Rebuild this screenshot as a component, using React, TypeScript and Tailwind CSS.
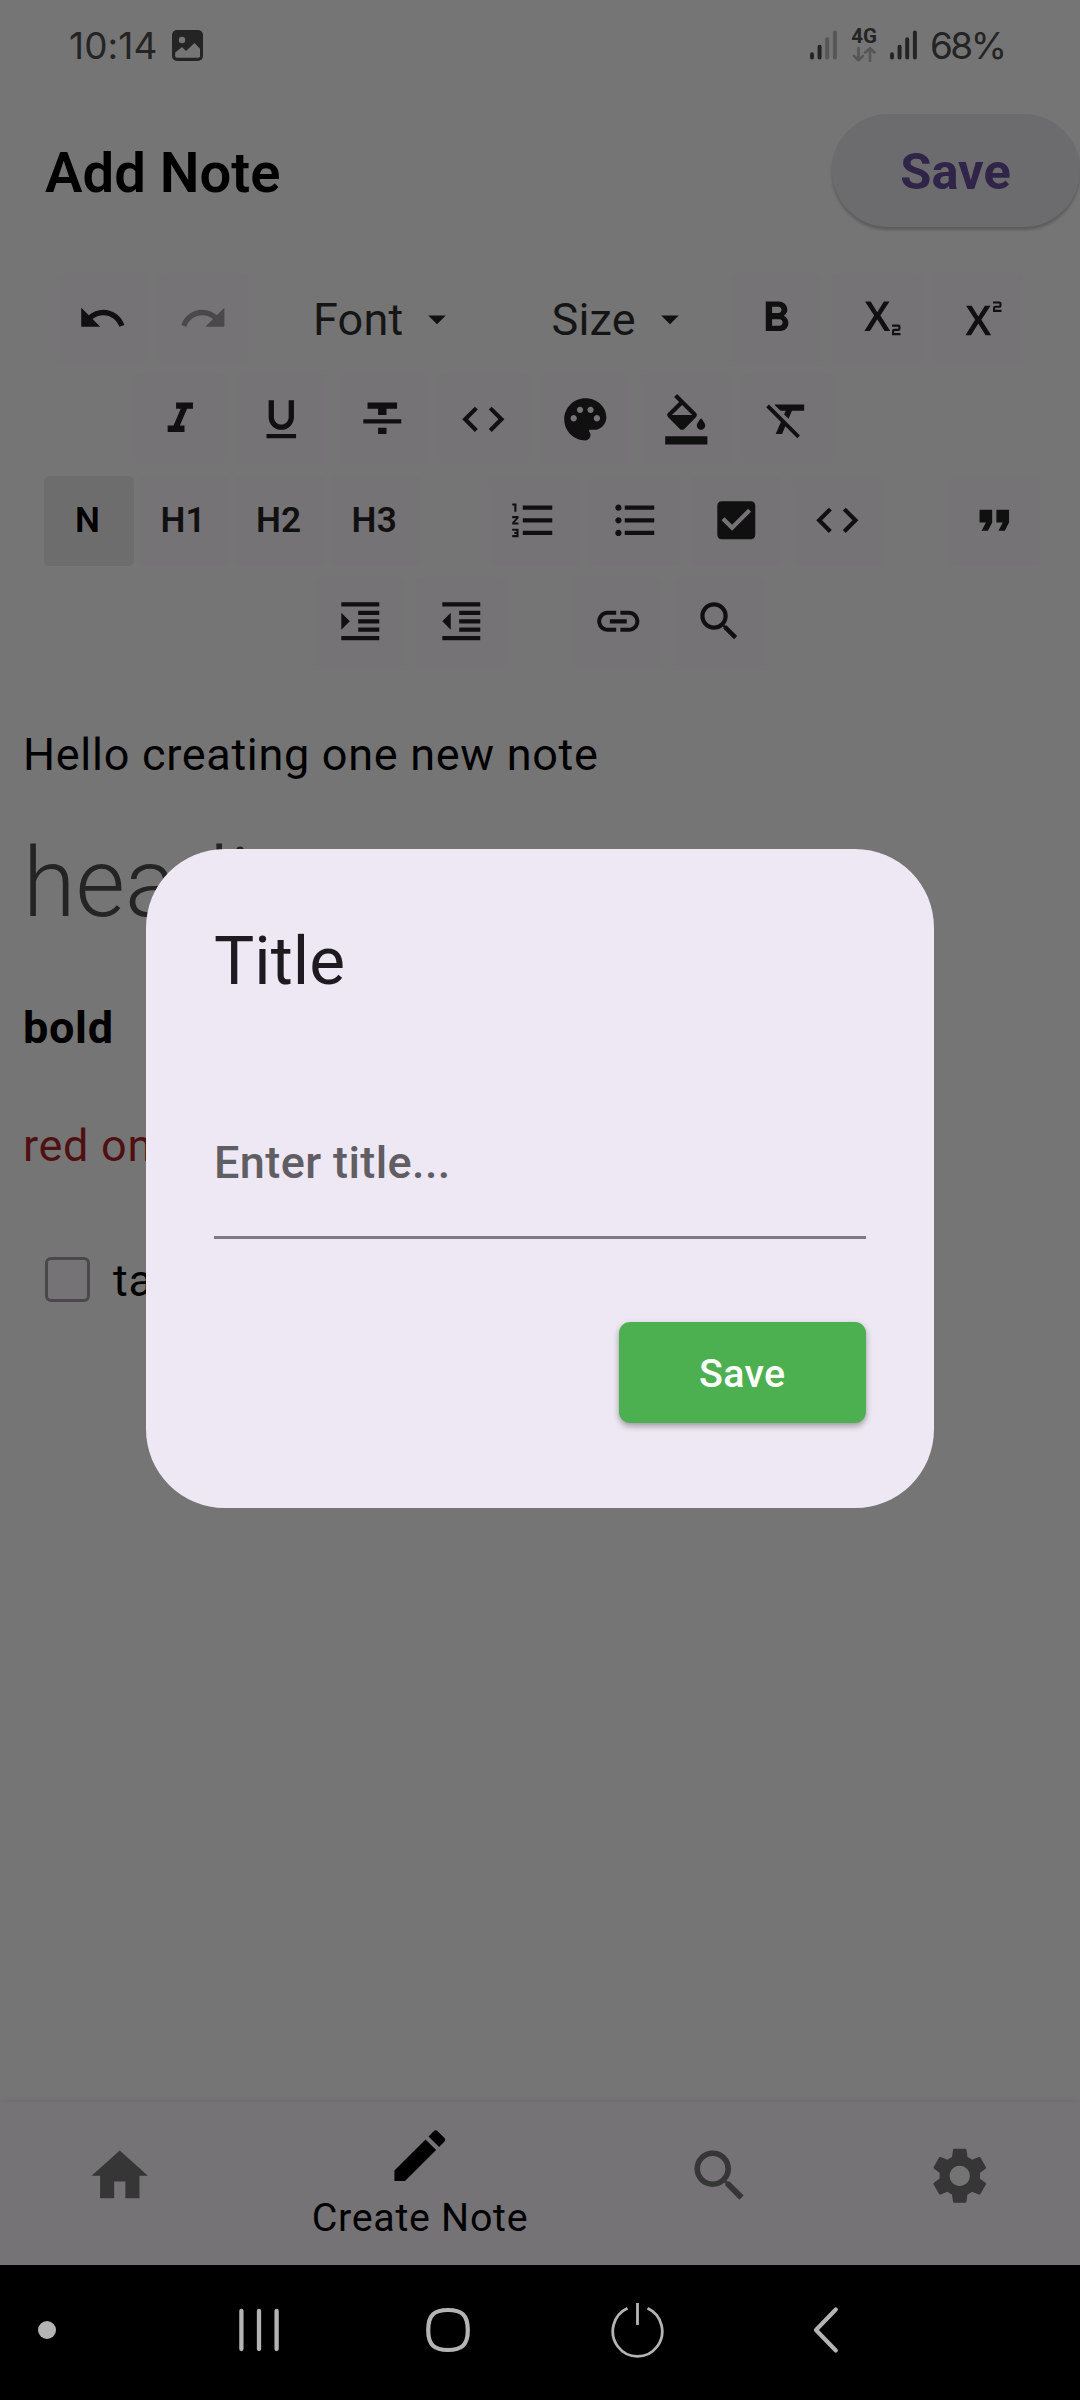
import React from "react";
import {
  MdUndo, MdRedo, MdFormatBold, MdSubscript, MdSuperscript, MdFormatItalic, MdFormatUnderlined,
  MdFormatStrikethrough, MdCode, MdPalette, MdFormatColorFill, MdFormatClear, MdFormatListNumbered,
  MdFormatListBulleted, MdCheckBox, MdFormatQuote, MdFormatIndentIncrease, MdFormatIndentDecrease,
  MdLink, MdSearch, MdArrowDropDown, MdHome, MdEdit, MdSettings,
} from "react-icons/md";

type IconType = React.ComponentType<{ className?: string }>;

function ToolButton({ icon: Icon, dim = false }: { icon: IconType; dim?: boolean }) {
  return (
    <button className="flex h-[90px] w-[90px] shrink-0 items-center justify-center rounded-[5.6px] bg-[#767376]">
      <Icon className={dim ? "h-[50.6px] w-[50.6px] text-[#4a494a]" : "h-[50.6px] w-[50.6px] text-[#101010]"} />
    </button>
  );
}

function HeadingButton({ label, active = false }: { label: string; active?: boolean }) {
  return (
    <button
      className={
        active
          ? "flex h-[90px] w-[90px] shrink-0 items-center justify-center rounded-[5.6px] bg-[#6d6d6d] pr-[2px] text-[35.2px] font-semibold leading-none tracking-[0.2px] text-black"
          : "flex h-[90px] w-[90px] shrink-0 items-center justify-center rounded-[5.6px] bg-[#767376] pr-[2px] text-[35.2px] font-semibold leading-none tracking-[0.2px] text-[#101010]"
      }
    >
      {label}
    </button>
  );
}

function Dropdown({ label, className }: { label: string; className: string }) {
  return (
    <div className={className}>
      <span className="h-[60px] text-[45px] leading-[62px] tracking-[0.2px] text-[#151515]">{label}</span>
      <MdArrowDropDown className="h-[42px] w-[42px] shrink-0 text-[#101010]" />
    </div>
  );
}

function Signal({ weak = false }: { weak?: boolean }) {
  return (
    <svg width="27" height="30" viewBox="0 0 27 30" fill="none" stroke="#242424" strokeWidth="4" strokeLinecap="round">
      <path d="M2 24.3V27.5M9.6 16.7V27.5" />
      <path d="M17.2 9.2V27.5M24.9 2.5V27.5" stroke={weak ? "#565656" : "#242424"} />
    </svg>
  );
}

function StatusBar() {
  return (
    <div className="flex h-[90px] shrink-0 items-start pl-[69px] pr-[76px] font-['Inter'] text-[#242424]">
      <span className="mt-[20px] w-[103px] whitespace-nowrap text-[37px] leading-[52px] tracking-[0.1px]">10:14</span>
      <svg className="mt-[30px]" width="31" height="31" viewBox="0 0 31 31">
        <rect width="31" height="31" rx="5" fill="#242424" />
        <circle cx="10" cy="10" r="3.2" fill="#757575" />
        <path d="M3.2 22.5L10 17l4 4 8.500-8 5.500 5.700V26c0 1-.7 1.700-1.700 1.700H4.900c-1 0-1.700-.7-1.700-1.700z" fill="#757575" />
      </svg>
      <div className="ml-auto flex items-start">
        <div className="mt-[30px]"><Signal weak /></div>
        <div className="ml-[13px] mt-[26px] flex w-[28px] flex-col items-center">
          <span className="font-['Roboto'] text-[20.5px] font-bold leading-[20px]">4G</span>
          <svg width="24" height="16" viewBox="0 0 24 16" fill="none" stroke="#565656" strokeWidth="2.6" strokeLinecap="round" strokeLinejoin="round">
            <path d="M6.5 2v12M2 9.8L6.500 14.300 11 9.800M18 15V3M13.300 6.500L18 2.200 22.500 6.500" />
          </svg>
        </div>
        <div className="ml-[12px] mt-[30px]"><Signal /></div>
        <span className="ml-[13px] mt-[20px] w-[74px] whitespace-nowrap text-[37px] leading-[52px] tracking-[-2.6px]">68%</span>
      </div>
    </div>
  );
}

function Header() {
  return (
    <header className="flex h-[160px] shrink-0 items-start justify-between pl-[45px]">
      <h1 className="mt-[48px] text-[56.2px] font-semibold leading-[70px] text-black">Add Note</h1>
      <button className="mt-[24px] flex h-[113px] w-[248px] items-center justify-center rounded-full bg-[#6c6c6e] pr-[1px] pt-[3px] text-[50.6px] font-bold leading-none text-[#302549] shadow-[0_3px_3px_rgba(0,0,0,0.22)]">
        Save
      </button>
    </header>
  );
}

function Toolbar() {
  return (
    <div className="flex shrink-0 flex-col gap-[11.25px] pt-[23px]">
      <div className="flex h-[90px] items-center pl-[57px]">
        <div className="flex gap-[11.25px]"><ToolButton icon={MdUndo} /><ToolButton icon={MdRedo} dim /></div>
        <Dropdown label="Font" className="ml-[64.75px] flex w-[238.500px] items-center gap-[13px] pt-[2px]" />
        <Dropdown label="Size" className="flex w-[179.500px] items-center gap-[13px] pt-[2px]" />
        <div className="flex gap-[11px]"><ToolButton icon={MdFormatBold} /><ToolButton icon={MdSubscript} /><ToolButton icon={MdSuperscript} /></div>
      </div>
      <div className="flex h-[90px] gap-[11.25px] pl-[135px]">
        <ToolButton icon={MdFormatItalic} /><ToolButton icon={MdFormatUnderlined} />
        <ToolButton icon={MdFormatStrikethrough} /><ToolButton icon={MdCode} /><ToolButton icon={MdPalette} />
        <ToolButton icon={MdFormatColorFill} /><ToolButton icon={MdFormatClear} />
      </div>
      <div className="flex h-[90px] pl-[43.500px]">
        <div className="flex gap-[5.6px]">
          <HeadingButton label="N" active /><HeadingButton label="H1" /><HeadingButton label="H2" /><HeadingButton label="H3" />
        </div>
        <div className="ml-[68.500px] flex gap-[11.25px]">
          <ToolButton icon={MdFormatListNumbered} /><ToolButton icon={MdFormatListBulleted} />
          <ToolButton icon={MdCheckBox} /><ToolButton icon={MdCode} />
        </div>
        <div className="ml-[67px]"><ToolButton icon={MdFormatQuote} /></div>
      </div>
      <div className="flex h-[90px] gap-[67px] pl-[315px]">
        <div className="flex gap-[11.25px]"><ToolButton icon={MdFormatIndentIncrease} /><ToolButton icon={MdFormatIndentDecrease} /></div>
        <div className="flex gap-[11.25px]"><ToolButton icon={MdLink} /><ToolButton icon={MdSearch} /></div>
      </div>
    </div>
  );
}

function Editor() {
  return (
    <main className="flex-1 pl-[23px] pt-[58.500px] text-[45px] leading-[60px] tracking-[0.7px] text-black">
      <p>Hello creating one new note</p>
      <p className="mt-[37.7px] text-[95.6px] font-light leading-[120px] tracking-normal text-[#242424]">heading</p>
      <p className="mt-[55.3px] font-bold">bold</p>
      <p className="mt-[58px] text-[#4f1011]">red one</p>
      <div className="mt-[75px] flex items-start pl-[22px]">
        <span className="mt-[6px] h-[45px] w-[45px] rounded-[6px] border-[3px] border-[#4a484a] bg-[#767376]" />
        <span className="ml-[23px]">task</span>
      </div>
    </main>
  );
}

function BottomNav() {
  return (
    <nav className="flex h-[163px] shrink-0 bg-[#767376] text-[#363636] shadow-[0_-2px_6px_rgba(0,0,0,0.06)]">
      <div className="flex w-[240px] justify-center pt-[39.500px]"><MdHome className="h-[67.5px] w-[67.5px]" /></div>
      <div className="flex w-[360px] flex-col items-center pt-[20px] text-black">
        <MdEdit className="h-[67.5px] w-[67.5px] shrink-0" />
        <span className="mt-[2.500px] text-[39.4px] leading-[52px] tracking-[0.7px]">Create Note</span>
      </div>
      <div className="flex w-[240px] justify-center pt-[39.500px]"><MdSearch className="h-[67.5px] w-[67.5px]" /></div>
      <div className="flex w-[240px] justify-center pt-[39.500px]"><MdSettings className="h-[67.5px] w-[67.5px]" /></div>
    </nav>
  );
}

function SystemNav() {
  return (
    <div className="flex h-[135px] shrink-0 items-center bg-black pb-[5px] pl-[38px]">
      <span className="h-[17.5px] w-[17.5px] rounded-full bg-[#b4b4b4]" />
      <svg className="ml-[183.500px]" width="40" height="44" viewBox="0 0 40 44" stroke="#b4b4b4" strokeWidth="4.300" strokeLinecap="round">
        <path d="M2.400 3V41M20 3V41M37.600 3V41" />
      </svg>
      <svg className="ml-[147px]" width="44" height="46" viewBox="0 0 44 46" fill="none" stroke="#b4b4b4" strokeWidth="4.200">
        <path d="M22 3c13.500 0 19.800 4.500 19.800 20S35.500 43 22 43 2.200 38.500 2.200 23 8.500 3 22 3z" />
      </svg>
      <svg className="ml-[141px]" width="53" height="56" viewBox="0 0 53 56" fill="none" stroke="#b4b4b4" strokeWidth="2.800">
        <path d="M16.500 6.200A24.700 25.200 0 1 0 36.500 6.200M26.500 1V23" />
      </svg>
      <svg className="ml-[149px]" width="26" height="48" viewBox="0 0 26 48" fill="none" stroke="#b4b4b4" strokeWidth="4.200" strokeLinecap="round" strokeLinejoin="round">
        <path d="M22.800 3.500L3 24 22.800 44.500" />
      </svg>
    </div>
  );
}

function TitleDialog() {
  return (
    <div role="dialog" className="absolute left-[146px] top-[849px] flex h-[659px] w-[788px] flex-col rounded-[78.75px] bg-[#eee8f4] px-[68px] pt-[82px]">
      <h2 className="text-[67.5px] leading-[60px] text-[#1d1b20]">Title</h2>
      <div className="mt-[111px] h-[137px] border-b-[3px] border-[#7f7987] pt-[31px] text-[45px] font-medium leading-[60px] tracking-[0.4px] text-[#605e63]">
        Enter title...
      </div>
      <button className="mt-[83px] flex h-[101px] w-[247.500px] items-center justify-center self-end rounded-[11.25px] bg-[#4caf50] pt-[2px] text-[39.4px] font-medium leading-none tracking-[0.3px] text-white shadow-[0_3px_6px_rgba(0,0,0,0.35)]">
        Save
      </button>
    </div>
  );
}

export default function App() {
  return (
    <div className="relative flex h-[2400px] w-[1080px] flex-col overflow-hidden bg-[#757575] font-['Roboto',sans-serif]">
      <StatusBar />
      <Header />
      <Toolbar />
      <Editor />
      <BottomNav />
      <SystemNav />
      <TitleDialog />
    </div>
  );
}
